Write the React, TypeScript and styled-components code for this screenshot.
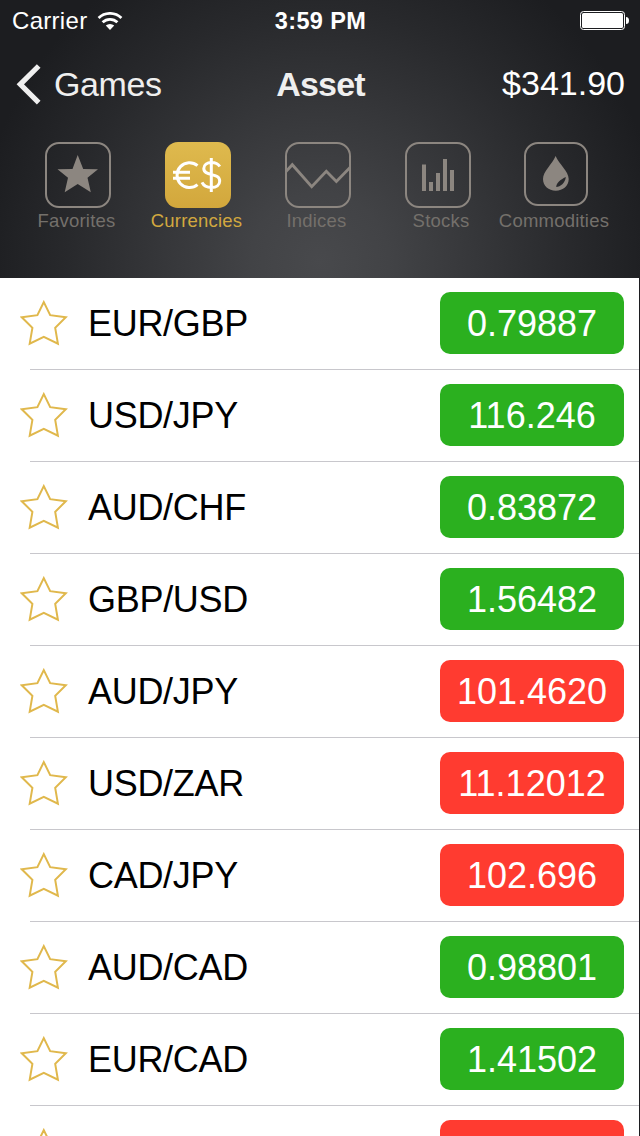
import React from "react";
import styled, { createGlobalStyle } from "styled-components";

const GlobalStyle = createGlobalStyle`
  * { box-sizing: border-box; }
  body {
    margin: 0;
    background: #1d1d20;
    font-family: "Liberation Sans", Arial, sans-serif;
    overflow: hidden;
  }
`;

const Screen = styled.div`
  width: 640px;
  height: 1136px;
  overflow: hidden;
  display: flex;
  flex-direction: column;
  background: #1d1d20;
`;

const Header = styled.header`
  height: 278px;
  flex: none;
  color: #fff;
  background: radial-gradient(ellipse 345px 345px at 320px 262px, #48494c 0%, #424346 20%, #36373a 45%, #28292c 73%, #1c1d20 100%);
`;

const StatusBar = styled.div`
  height: 40px;
  display: grid;
  grid-template-columns: 1fr auto 1fr;
  align-items: center;
  padding: 2px 11px 0 12px;
  font-size: 24px;
  line-height: 28px;
`;

const Carrier = styled.div`
  display: flex;
  align-items: center;
  gap: 10px;
  letter-spacing: 0.3px;
`;

const Clock = styled.div`
  font-weight: 700;
  font-size: 23.5px;
  letter-spacing: 0.4px;
`;

const BatteryIcon = styled.svg`
  justify-self: end;
`;

const NavBar = styled.nav`
  height: 88px;
  display: grid;
  grid-template-columns: 1fr auto 1fr;
  align-items: center;
  padding: 0 15px 0 16px;
  font-size: 34px;
  line-height: 40px;
`;

const BackButton = styled.div`
  display: flex;
  align-items: center;
  gap: 12px;
  color: #efefef;
  letter-spacing: -0.4px;
`;

const Title = styled.div`
  font-weight: 700;
  color: #efefef;
  letter-spacing: -0.8px;
`;

const Balance = styled.div`
  justify-self: end;
  margin-top: -2px;
`;

const Tabs = styled.div`
  display: grid;
  grid-template-columns: repeat(5, 120px);
  padding: 14px 0 0 18px;
`;

const Tab = styled.div<{ $active?: boolean }>`
  display: flex;
  flex-direction: column;
  align-items: center;
  color: ${(p) => (p.$active ? "#d2a83f" : "#74706b")};
`;

const TabIcon = styled.svg<{ $nudge?: number }>`
  width: 66px;
  height: 66px;
  margin-left: ${(p) => p.$nudge ?? 0}px;
`;

const TabLabel = styled.span<{ $nudge?: number }>`
  margin-top: 2px;
  margin-left: ${(p) => p.$nudge ?? 0}px;
  font-size: 18.5px;
  line-height: 22px;
  letter-spacing: 0.22px;
  white-space: nowrap;
`;

const List = styled.main`
  width: 639px;
  flex: 1;
  min-height: 0;
  overflow: hidden;
  background: #fff;
`;

const Row = styled.div`
  height: 92px;
  display: flex;
  align-items: flex-start;
  padding: 14px 15px 0 20px;
  background: linear-gradient(#c8c7cc, #c8c7cc) 30px 91px / 609px 1px no-repeat;
`;

const StarIcon = styled.svg`
  width: 48px;
  height: 46px;
  margin-top: 8px;
`;

const Pair = styled.span`
  flex: 1;
  margin-left: 20px;
  color: #000;
  font-size: 36px;
  line-height: 64px;
  letter-spacing: -0.3px;
`;

const Price = styled.span<{ $up: boolean }>`
  width: 184px;
  height: 62px;
  border-radius: 10px;
  background: ${(p) => (p.$up ? "#2bb01f" : "#ff3b30")};
  color: #fff;
  font-size: 36px;
  line-height: 63px;
  text-align: center;
`;

const muted = "#8c8680";

const Frame = () => (
  <rect x="1" y="1" width="64" height="64" rx="13" fill="none" stroke={muted} strokeWidth="2" />
);

const tabs = [
  {
    label: "Favorites",
    nudge: -3,
    art: (
      <>
        <Frame />
        <path
          d="M32.7 13 L38.2 27 L53 27.3 L42.5 35.7 L45.8 50.3 L32.7 42 L19.7 50.3 L23 35.7 L12.5 27.3 L27.5 27Z"
          fill={muted}
        />
      </>
    ),
  },
  {
    label: "Currencies",
    nudge: -3,
    active: true,
    art: (
      <>
        <defs>
          <linearGradient id="gold" x1="0" y1="0" x2="0" y2="1">
            <stop offset="0" stopColor="#dfba4e" />
            <stop offset="1" stopColor="#d2a73c" />
          </linearGradient>
        </defs>
        <rect width="66" height="66" rx="13" fill="url(#gold)" />
        <g fill="none" stroke="#fff" strokeWidth="3">
          <path d="M32.5 23.7 A12.4 12.4 0 1 0 32.5 42.6 M8 30.3 H25 M8 36.2 H25" />
          <path d="M54.8 24.5 C53 21.6 50 20.5 46.5 20.5 C42 20.5 38.8 23 38.8 26.5 C38.8 35 54.7 30.2 54.7 39 C54.7 43 51.2 45.5 46.7 45.5 C42.2 45.5 38.5 43.6 37 40.4 M46.3 16 V50" />
        </g>
      </>
    ),
  },
  {
    label: "Indices",
    nudge: -3,
    art: (
      <>
        <Frame />
        <path d="M1 29.5 L7.3 22.7 L26.7 44.6 L41.3 29.2 L51.4 39.5 L65 25.5" fill="none" stroke={muted} strokeWidth="2.8" />
      </>
    ),
  },
  {
    label: "Stocks",
    nudge: 6,
    art: (
      <>
        <Frame />
        <path d="M17 22.5h4v26.5h-4z M24 40h4v9h-4z M31 31h4v18h-4z M38 17h4v32h-4z M45 28h4v21h-4z" fill={muted} />
      </>
    ),
  },
  {
    label: "Commodities",
    nudge: -8,
    iconNudge: -4,
    art: (
      <>
        <rect x="2" y="1" width="62" height="62" rx="13" fill="none" stroke={muted} strokeWidth="2" />
        <path
          fillRule="evenodd"
          d="M32.6 14 C36 22 45.7 29.5 45.7 37 C45.7 44 40 48.7 32.8 48.7 C25.6 48.7 20 44 20 37 C20 29.5 29.3 22 32.6 14Z M42.8 35 C37 37.7 33.6 41 33.2 44.9 C37.5 44.8 42.2 41 42.8 35Z"
          fill={muted}
        />
      </>
    ),
  },
];

const assets = [
  { pair: "EUR/GBP", price: "0.79887", up: true },
  { pair: "USD/JPY", price: "116.246", up: true },
  { pair: "AUD/CHF", price: "0.83872", up: true },
  { pair: "GBP/USD", price: "1.56482", up: true },
  { pair: "AUD/JPY", price: "101.4620", up: false },
  { pair: "USD/ZAR", price: "11.12012", up: false },
  { pair: "CAD/JPY", price: "102.696", up: false },
  { pair: "AUD/CAD", price: "0.98801", up: true },
  { pair: "EUR/CAD", price: "1.41502", up: true },
  { pair: "", price: "", up: false },
];

export default function App() {
  return (
    <>
      <GlobalStyle />
      <Screen>
        <Header>
          <StatusBar>
            <Carrier>
              Carrier
              <svg width="26" height="19" viewBox="0 0 26 19">
                <g fill="none" stroke="#fff" strokeWidth="2.8">
                  <path d="M1.6 6 A16.4 16.4 0 0 1 24.4 6" />
                  <path d="M5.6 10.3 A10.6 10.6 0 0 1 20.4 10.3" />
                </g>
                <path d="M8.8 13.6 A6.2 6.2 0 0 1 17.2 13.6 L13 18Z" fill="#fff" />
              </svg>
            </Carrier>
            <Clock>3:59 PM</Clock>
            <BatteryIcon width="49" height="20" viewBox="0 0 49 20">
              <rect x="0.5" y="0.5" width="44" height="18" rx="3" fill="none" stroke="#fff" />
              <rect x="2" y="2" width="41" height="15" rx="1.5" fill="#fff" />
              <path d="M46 6 Q49 6 49 9.5 Q49 13 46 13Z" fill="#fff" />
            </BatteryIcon>
          </StatusBar>
          <NavBar>
            <BackButton>
              <svg width="26" height="42" viewBox="0 0 26 42">
                <path d="M22.7 3 L4.3 21.3 L22.7 39.6" fill="none" stroke="#efefef" strokeWidth="5.2" />
              </svg>
              Games
            </BackButton>
            <Title>Asset</Title>
            <Balance>$341.90</Balance>
          </NavBar>
          <Tabs>
            {tabs.map((t) => (
              <Tab key={t.label} $active={t.active}>
                <TabIcon viewBox="0 0 66 66" $nudge={t.iconNudge}>
                  {t.art}
                </TabIcon>
                <TabLabel $nudge={t.nudge}>{t.label}</TabLabel>
              </Tab>
            ))}
          </Tabs>
        </Header>
        <List>
          {assets.map((a, i) => (
            <Row key={i}>
              <StarIcon viewBox="0 0 48 46">
                <path
                  d="M23.8 2.1 L30.2 15.2 L45.8 17.3 L35.2 27.8 L37.9 43.7 L23.8 36.9 L9.7 43.7 L12.4 27.8 L1.8 17.3 L17.4 15.2Z"
                  fill="none"
                  stroke="#e0b84c"
                  strokeWidth="2"
                />
              </StarIcon>
              <Pair>{a.pair}</Pair>
              <Price $up={a.up}>{a.price}</Price>
            </Row>
          ))}
        </List>
      </Screen>
    </>
  );
}
